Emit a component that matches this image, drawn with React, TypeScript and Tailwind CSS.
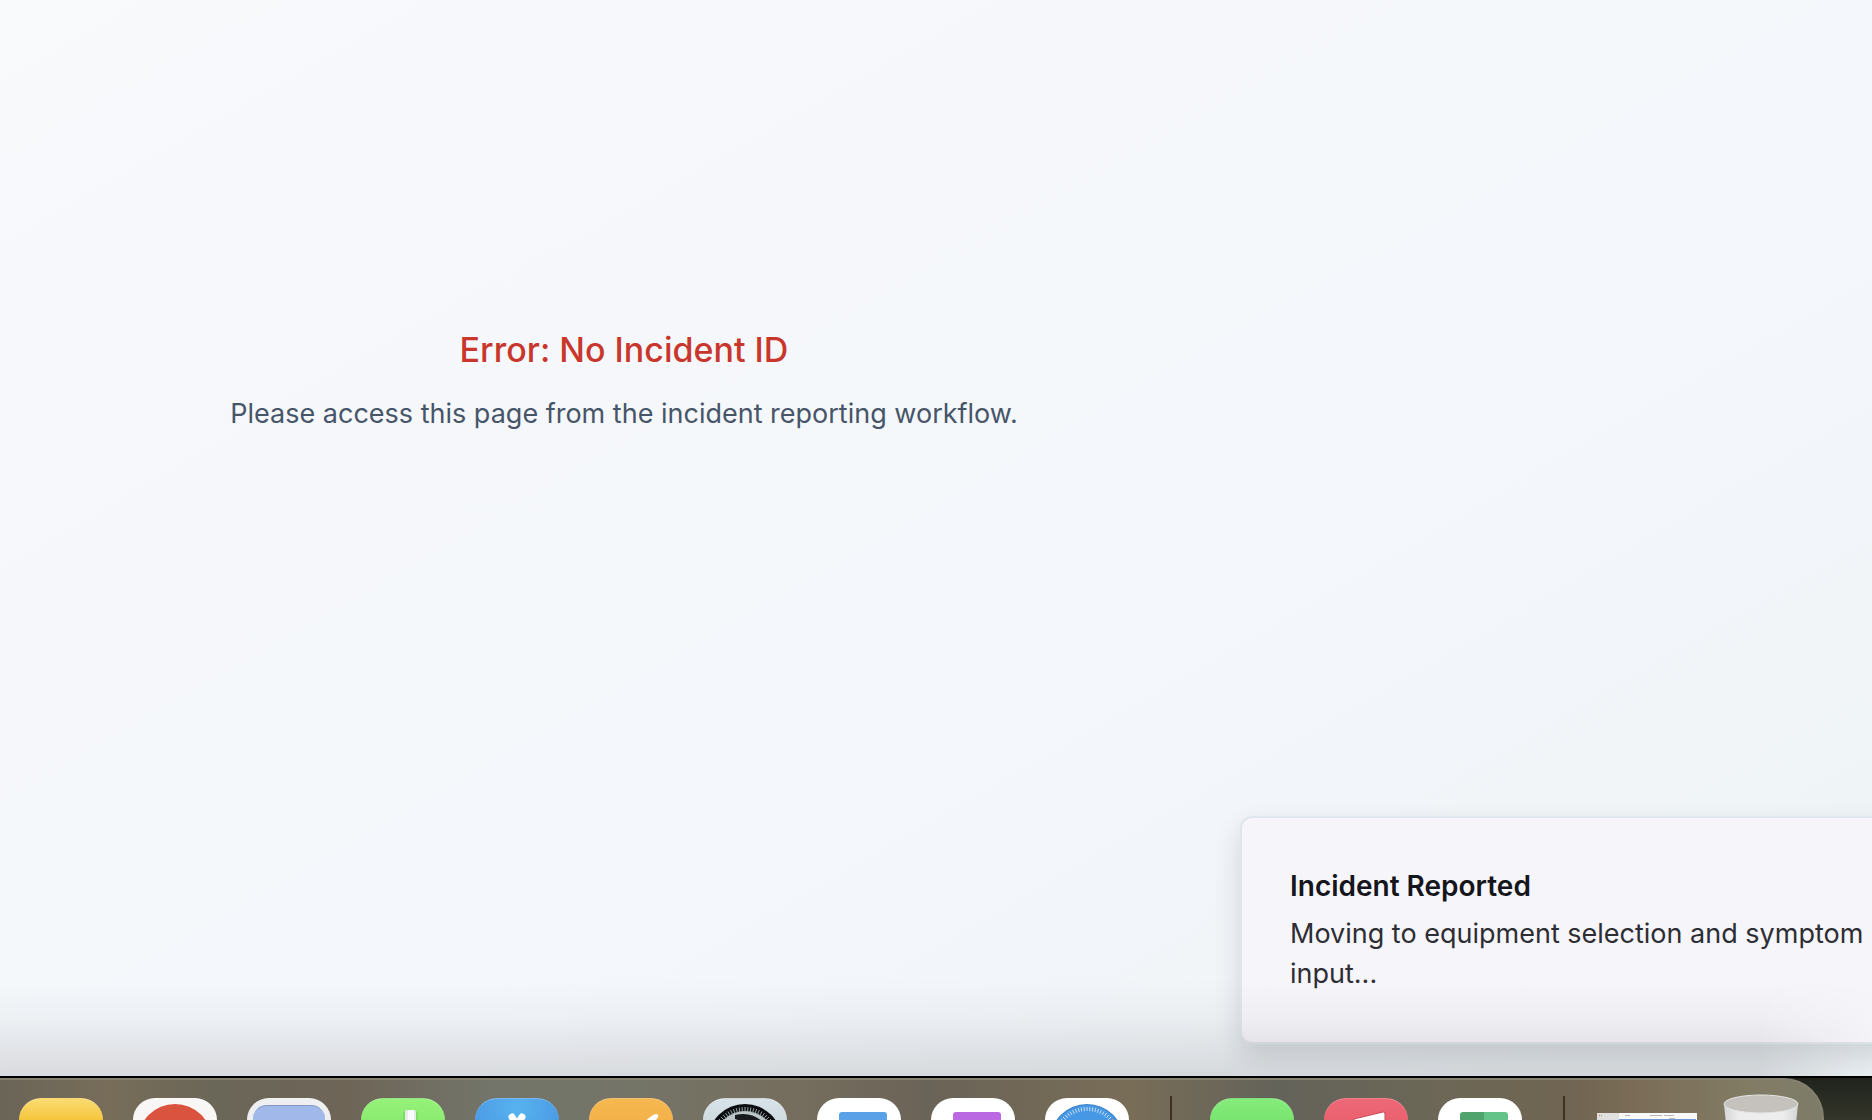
const Squircle = ({ children, className }: { children?: React.ReactNode; className: string }) => (
  <div className={`h-21 w-21 shrink-0 overflow-hidden rounded-[22px] border-t border-white/30 ${className}`}>{children}</div>
);

function Ticks({ count, r1, r2, color, width }: { count: number; r1: number; r2: number; color: string; width: number }) {
  const angles = Array.from({ length: count }, (_, i) => (i * 2 * Math.PI) / count);
  return (
    <g stroke={color} strokeWidth={width}>
      {angles.map((a) => (
        <line key={a} x1={42 + r1 * Math.cos(a)} y1={42 + r1 * Math.sin(a)} x2={42 + r2 * Math.cos(a)} y2={42 + r2 * Math.sin(a)} />
      ))}
    </g>
  );
}

function Dock() {
  return (
    <footer className="flex h-11 shrink-0 overflow-hidden border-t-2 border-black bg-linear-to-b from-[#20231c] to-[#34362b]">
      <div className="mr-12 flex h-30 flex-1 items-start overflow-hidden rounded-tr-[40px] border-t-2 border-r-2 border-[#87806f] bg-[linear-gradient(90deg,#6b6558_0%,#776d59_6%,#6a6658_12%,#6e6557_19%,#73756a_27%,#747568_34%,#756d5d_44%,#6a6357_51%,#786d57_62%,#64635a_70%,#6b6757_78%,#706552_86%,#7b6d57_90%,#827c65_96%,#7d7c68_100%)] pl-[19px]">
        <div className="flex gap-[30px] pt-[18px]">
          <Squircle className="bg-linear-to-b from-[#f9dc70] via-[#f6c53d] via-25% to-[#f6c53d]" />
          <Squircle className="bg-[#f8f7f5]">
            <svg viewBox="0 0 84 84" className="size-21" aria-hidden="true">
              <circle cx="42" cy="42" r="37" fill="#d9533f" />
            </svg>
          </Squircle>
          <Squircle className="bg-[#efeef0] p-[6px]">
            <div className="h-18 rounded-[14px] border-t border-[#8298c4] bg-[#a0b9ea]" />
          </Squircle>
          <Squircle className="bg-linear-to-b from-[#96f27a] to-[#67d94f]">
            <svg viewBox="0 0 84 84" className="size-21" aria-hidden="true">
              <rect x="42" y="12" width="15" height="50" rx="3" fill="#6fc957" opacity="0.5" />
              <rect x="44" y="11" width="11" height="50" rx="2" fill="#e6ece9" />
              <rect x="47" y="11" width="6" height="50" rx="1" fill="#fafcfb" />
            </svg>
          </Squircle>
          <Squircle className="bg-[radial-gradient(circle_at_50%_10%,#57b3ef,#4a97e3_60%)]">
            <svg viewBox="0 0 84 84" className="size-21" aria-hidden="true">
              <path d="M37 18 L55 50 M47 18 L28 50" stroke="#fff" strokeWidth="7" strokeLinecap="round" />
            </svg>
          </Squircle>
          <Squircle className="bg-linear-to-b from-[#f6b850] to-[#ee9f3a]">
            <svg viewBox="0 0 84 84" className="size-21" aria-hidden="true">
              <path d="M54 25 C58 20 63 16 67 15 Q70 15 69 18 L58 34Z" fill="#fff" />
            </svg>
          </Squircle>
          <Squircle className="bg-linear-to-b from-[#d8e3e9] to-[#b9c4c7]">
            <svg viewBox="0 0 84 84" className="size-21" aria-hidden="true">
              <circle cx="42" cy="42" r="37" fill="#0b0e10" />
              <circle cx="42" cy="42" r="30" fill="#bcc6c9" />
              <Ticks count={72} r1={29} r2={34} color="#9ba5a8" width={1} />
              <path d="M32 16 Q49 12 61 24 V50 H42 Q44 22 32 20Z" fill="#171b1e" />
            </svg>
          </Squircle>
          <Squircle className="bg-white pt-[13px]">
            <div className="ml-[22px] h-15 w-12 rounded-[3px] bg-[#5aa1e8]" />
          </Squircle>
          <Squircle className="bg-white pt-[13px]">
            <div className="ml-[22px] h-15 w-12 rounded-[3px] bg-[#bb69e3]" />
          </Squircle>
          <Squircle className="bg-white">
            <svg viewBox="0 0 84 84" className="size-21" aria-hidden="true">
              <circle cx="42" cy="42" r="37" fill="#3f83c7" />
              <circle cx="42" cy="42" r="36" fill="#4698e4" />
              <Ticks count={72} r1={30} r2={34} color="#c9e2f7" width={1} />
              <path d="M69 19 L40 38 L46 44Z" fill="#d9533f" />
            </svg>
          </Squircle>
        </div>
        <div className="mt-4 ml-[41px] h-20 w-0.5 shrink-0 bg-[#3c321f]" />
        <div className="ml-[38px] flex gap-[30px] pt-[18px]">
          <Squircle className="bg-linear-to-b from-[#85ec7b] to-[#53cf50]" />
          <Squircle className="bg-linear-to-b from-[#ed6877] to-[#e34a56]">
            <svg viewBox="0 0 84 84" className="size-21" aria-hidden="true">
              <path d="M30 20 L59 13 Q61 12 61 15 V55 H30Z" fill="#fff" stroke="#c94a58" strokeWidth="1" />
            </svg>
          </Squircle>
          <Squircle className="bg-white pt-[13px]">
            <div className="ml-[22px] h-15 w-12 rounded-[3px] bg-[linear-gradient(90deg,#51a36e_50%,#64c389_50%)]" />
          </Squircle>
        </div>
        <div className="mt-4 ml-[41px] h-20 w-0.5 shrink-0 bg-[#3c321f]" />
        <svg viewBox="0 0 100 64" className="mt-[33px] ml-8 h-16 w-[100px] shrink-0" aria-hidden="true">
          <rect width="100" height="64" fill="#f8f8f7" />
          <rect width="22" height="64" fill="#dfdfde" />
          <rect x="22" y="6" width="77" height="40" fill="#6f98dc" />
          <g fill="#b9b9b7">
            <rect x="28" y="2" width="5" height="1" />
            <rect x="53" y="2" width="12" height="1" />
            <rect x="67" y="2" width="10" height="1" />
            <rect x="72" y="5" width="6" height="1" />
          </g>
          <rect x="2" y="2" width="1" height="1" fill="#e0685e" />
          <rect x="4" y="2" width="1" height="1" fill="#7cc36a" />
        </svg>
        <svg viewBox="0 0 76 80" className="mt-[14px] ml-[26px] h-20 w-19 shrink-0" aria-hidden="true">
          <defs>
            <linearGradient id="bin" x1="0" x2="1">
              <stop offset="0" stopColor="#d6d6d8" />
              <stop offset="0.2" stopColor="#ededee" />
              <stop offset="0.8" stopColor="#ededee" />
              <stop offset="1" stopColor="#d4d4d6" />
            </linearGradient>
          </defs>
          <path d="M1 10 L8 80 H68 L75 10Z" fill="url(#bin)" />
          <ellipse cx="38" cy="10" rx="37" ry="9" fill="#c5c2be" stroke="#e6e5e5" strokeWidth="1" />
        </svg>
      </div>
    </footer>
  );
}

export default function App() {
  return (
    <div className="flex h-screen flex-col overflow-hidden font-[Inter,sans-serif]">
      <div className="relative flex-1 overflow-hidden bg-[linear-gradient(to_bottom_right,#f8fafc_0%,#f6f8fb_15%,#f4f7fb_60%,#eff4f7_90%)]">
        <main className="w-2/3 pt-[328px] text-center">
          <h1 className="mb-4 text-[34px] leading-11 font-medium text-[#c9372c]">Error: No Incident ID</h1>
          <p className="text-[27px] leading-13 text-[#475569]">Please access this page from the incident reporting workflow.</p>
        </main>
        <div
          role="status"
          className="absolute -right-28 bottom-8 left-[1240px] rounded-xl border-2 border-[#e0e6ed] bg-[#f6f5fa] p-12 shadow-[0_12px_28px_rgba(20,30,40,0.14)]"
        >
          <h2 className="text-[28px] leading-10 font-semibold text-[#15161b]">Incident Reported</h2>
          <p className="mt-2 max-w-[590px] text-[27px] leading-10 text-[#2d2e34]">Moving to equipment selection and symptom input...</p>
        </div>
        <div className="pointer-events-none absolute inset-x-0 bottom-0 h-24 bg-[linear-gradient(to_bottom,transparent,rgba(20,18,22,0.03)_40%,rgba(20,18,22,0.12))] mask-[linear-gradient(to_right,black_94%,transparent_101%)]" />
      </div>
      <Dock />
    </div>
  );
}
